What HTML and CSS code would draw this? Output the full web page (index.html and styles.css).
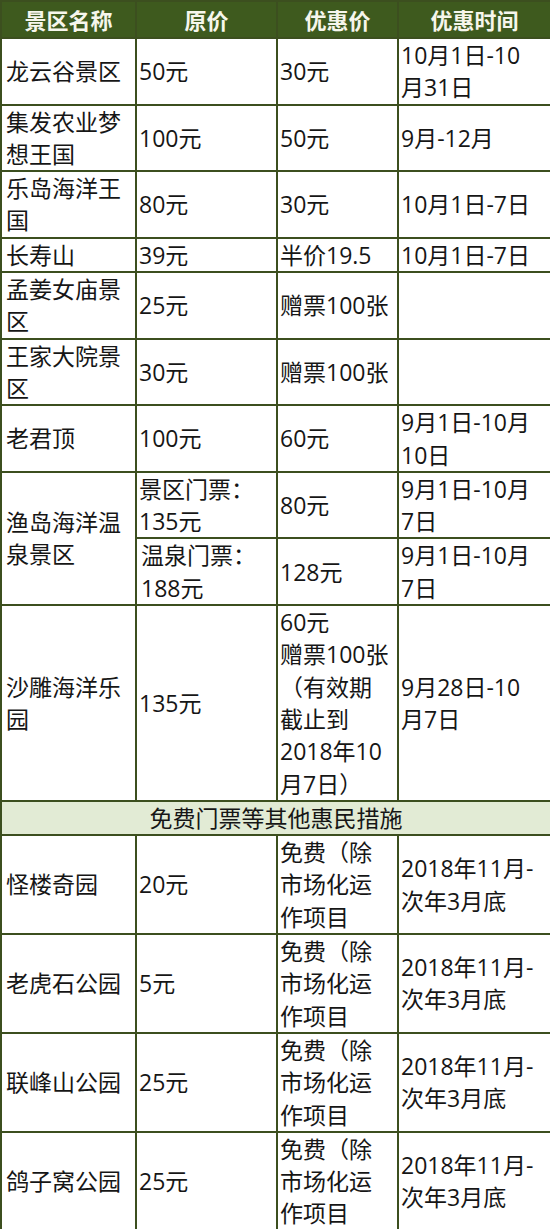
FILE: index.html
```html
<!DOCTYPE html>
<html lang="zh-CN">
<head>
<meta charset="utf-8">
<title>景区优惠</title>
<link rel="stylesheet" href="styles.css">
</head>
<body>
<table class="tbl">
  <colgroup>
    <col class="c1"><col class="c2"><col class="c3"><col class="c4">
  </colgroup>
  <thead>
    <tr class="head">
      <th>景区名称</th><th>原价</th><th>优惠价</th><th>优惠时间</th>
    </tr>
  </thead>
  <tbody>
    <tr><td>龙云谷景区</td><td>50元</td><td>30元</td><td>10月1日-10<br>月31日</td></tr>
    <tr><td>集发农业梦<br>想王国</td><td>100元</td><td>50元</td><td>9月-12月</td></tr>
    <tr><td>乐岛海洋王<br>国</td><td>80元</td><td>30元</td><td>10月1日-7日</td></tr>
    <tr><td>长寿山</td><td>39元</td><td>半价19.5</td><td>10月1日-7日</td></tr>
    <tr><td>孟姜女庙景<br>区</td><td>25元</td><td>赠票100张</td><td></td></tr>
    <tr><td>王家大院景<br>区</td><td>30元</td><td>赠票100张</td><td></td></tr>
    <tr><td>老君顶</td><td>100元</td><td>60元</td><td>9月1日-10月<br>10日</td></tr>
    <tr><td rowspan="2">渔岛海洋温<br>泉景区</td><td>景区门票<span class="p">：</span><br>135元</td><td>80元</td><td>9月1日-10月<br>7日</td></tr>
    <tr><td>温泉门票<span class="p">：</span><br>188元</td><td>128元</td><td>9月1日-10月<br>7日</td></tr>
    <tr><td>沙雕海洋乐<br>园</td><td>135元</td><td>60元<br>赠票100张<br><span class="p">（</span>有效期<br>截止到<br>2018年10<br>月7日<span class="p">）</span></td><td>9月28日-10<br>月7日</td></tr>
    <tr class="band"><td colspan="4">免费门票等其他惠民措施</td></tr>
    <tr><td>怪楼奇园</td><td>20元</td><td>免费<span class="p">（</span>除<br>市场化运<br>作项目</td><td>2018年11月-<br>次年3月底</td></tr>
    <tr><td>老虎石公园</td><td>5元</td><td>免费<span class="p">（</span>除<br>市场化运<br>作项目</td><td>2018年11月-<br>次年3月底</td></tr>
    <tr><td>联峰山公园</td><td>25元</td><td>免费<span class="p">（</span>除<br>市场化运<br>作项目</td><td>2018年11月-<br>次年3月底</td></tr>
    <tr><td>鸽子窝公园</td><td>25元</td><td>免费<span class="p">（</span>除<br>市场化运<br>作项目</td><td>2018年11月-<br>次年3月底</td></tr>
  </tbody>
</table>
</body>
</html>
```

FILE: styles.css
```css
html, body {
  margin: 0;
  padding: 0;
  background: #ffffff;
}

.tbl {
  width: 550px;
  table-layout: fixed;
  border-collapse: collapse;
  font-family: "Open Sans", "Noto Sans CJK SC", sans-serif;
  font-size: 23px;
  color: #161616;
}

.c1 { width: 135px; }
.c2 { width: 141px; }
.c3 { width: 121px; }
.c4 { width: 153px; }

.tbl th,
.tbl td {
  border: 2px solid #3c4f1f;
  padding: 0 1px 0 4px;
  line-height: 32.3px;
  vertical-align: middle;
  text-align: left;
  white-space: nowrap;
  overflow: hidden;
}

.tbl td + td {
  padding-left: 2px;
}

.p {
  font-family: "Noto Sans CJK TC", "Noto Sans CJK SC", sans-serif;
  line-height: 0;
}

.head th {
  background: #3e5a1e;
  color: #f6f6ec;
  font-family: "Noto Sans CJK SC", sans-serif;
  font-weight: 700;
  font-size: 22px;
  text-align: center;
  height: 35px;
  line-height: 33px;
  padding: 0;
}

.band td {
  background: #e2ebd5;
  text-align: center;
  padding: 0;
}
```
